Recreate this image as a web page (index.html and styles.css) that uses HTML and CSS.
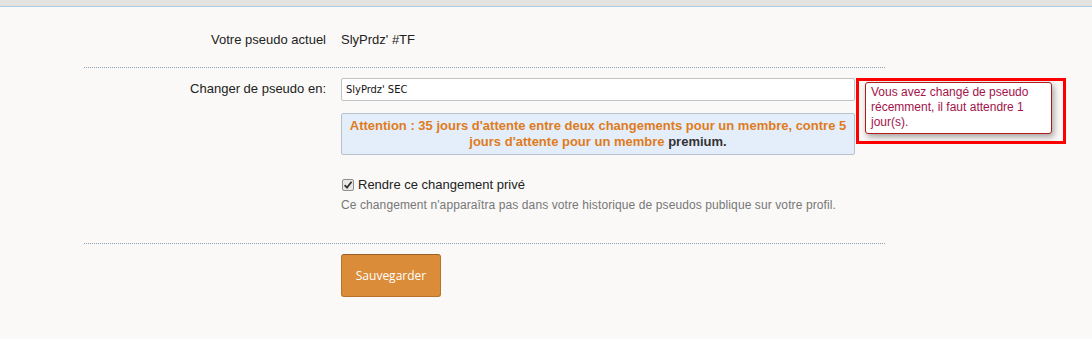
FILE: index.html
```html
<!DOCTYPE html>
<html lang="fr">
<head>
<meta charset="utf-8">
<title>Changer de pseudo</title>
<link rel="stylesheet" href="styles.css">
</head>
<body>
<div class="topbar"></div>
<form class="form">
  <div class="row row-current">
    <div class="label">Votre pseudo actuel</div>
    <div class="content">SlyPrdz' #TF</div>
  </div>
  <div class="row row-change">
    <label class="label label-input" for="pseudo">Changer de pseudo en:</label>
    <div class="content">
      <div class="field-wrap">
        <input id="pseudo" class="text-input" type="text" value="SlyPrdz' SEC">
        <div class="highlight"></div>
        <div class="tooltip">Vous avez changé de pseudo récemment, il faut attendre 1 jour(s).</div>
      </div>
      <div class="notice">Attention : 35 jours d'attente entre deux changements pour un membre, contre 5 jours d'attente pour un membre <span class="premium">premium.</span></div>
      <label class="check">
        <input type="checkbox" class="checkbox" checked>
        <span>Rendre ce changement privé</span>
      </label>
      <p class="hint">Ce changement n'apparaîtra pas dans votre historique de pseudos publique sur votre profil.</p>
    </div>
  </div>
  <div class="row row-submit">
    <div class="label"></div>
    <div class="content">
      <button type="button" class="button">Sauvegarder</button>
    </div>
  </div>
</form>
</body>
</html>
```
FILE: styles.css
```css
html, body {
  margin: 0;
  padding: 0;
}
body {
  background: #faf9f7;
  font-family: "Liberation Sans", Arial, sans-serif;
  font-size: 13px;
  color: #222;
  height: 339px;
  overflow: hidden;
}
.topbar {
  height: 6px;
  background: #e4e3e1;
  border-bottom: 1px solid #a9cde3;
}
.form {
  margin: 0 0 0 84px;
  width: 801px;
}
.row {
  display: grid;
  grid-template-columns: 242px 514px;
  column-gap: 15px;
}
.row + .row {
  border-top: 1px dotted #8fa3b3;
}
.label {
  text-align: right;
  line-height: 16px;
  color: #222;
}
.content {
  line-height: 16px;
}
.row-current {
  padding: 25px 0 19px;
}
.row-change {
  padding: 10px 0 30px;
}
.label-input {
  padding-top: 3px;
}
.field-wrap {
  position: relative;
}
.text-input {
  display: block;
  box-sizing: border-box;
  width: 514px;
  height: 23px;
  margin: 0;
  padding: 0 4px;
  border: 1px solid #c2c2c2;
  border-radius: 2px;
  background: #fff;
  font-family: "DejaVu Sans Condensed", "DejaVu Sans", sans-serif;
  font-size: 11px;
  color: #111;
  outline: none;
}
.highlight {
  position: absolute;
  left: 515px;
  top: 0;
  width: 204px;
  height: 60px;
  border: 3px solid #ff0000;
}
.tooltip {
  position: absolute;
  left: 524px;
  top: 4px;
  width: 175px;
  padding: 2px 5px 3px;
  background: #fff;
  border: 1px solid #b31b1b;
  border-radius: 3px;
  box-shadow: 2px 3px 6px rgba(0, 0, 0, 0.35);
  font-size: 12px;
  line-height: 15px;
  color: #a3124a;
}
.notice {
  margin-top: 12px;
  padding: 4px 5px;
  background: #e3eefa;
  border: 1px solid #b8c2cc;
  border-radius: 2px;
  text-align: center;
  font-weight: bold;
  color: #e07b1c;
}
.premium {
  color: #333;
}
.check {
  display: flex;
  align-items: center;
  gap: 4px;
  margin-top: 22px;
  color: #222;
}
.checkbox {
  appearance: none;
  -webkit-appearance: none;
  box-sizing: border-box;
  margin: 0 0 0 1px;
  width: 12px;
  height: 12px;
  border: 1px solid #8e8e8e;
  border-radius: 2px;
  background-color: #e8e8e8;
  background-image: url("data:image/svg+xml;utf8,<svg xmlns='http://www.w3.org/2000/svg' viewBox='0 0 10 10'><path d='M1.6 5.2 L4 7.6 L8.6 1.8' fill='none' stroke='%23333' stroke-width='1.8'/></svg>");
  background-size: 10px 10px;
  background-repeat: no-repeat;
  background-position: center;
}
.hint {
  margin: 4px 0 0;
  font-size: 12px;
  color: #777;
  letter-spacing: 0.1px;
}
.row-submit {
  padding: 10px 0;
}
.button {
  width: 100px;
  height: 43px;
  padding: 0;
  background: #db8c38;
  border: 1px solid #b7732c;
  border-top-color: #9c5f25;
  border-radius: 3px;
  color: #fff;
  font-family: "Open Sans", sans-serif;
  font-size: 12px;
  cursor: pointer;
}
```
